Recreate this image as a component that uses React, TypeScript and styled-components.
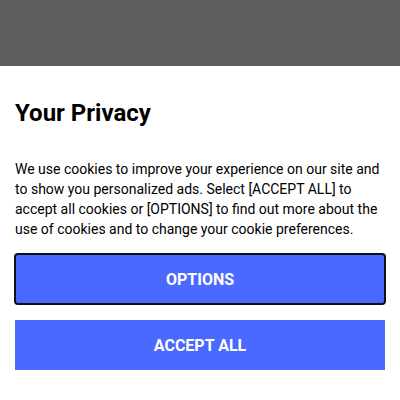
import React from "react";
import styled, { createGlobalStyle } from "styled-components";

const GlobalStyle = createGlobalStyle`
  *, *::before, *::after { box-sizing: border-box; }
  body {
    margin: 0;
    background: #5e5e5e;
    color: #000;
    font-family: Roboto, "Liberation Sans", sans-serif;
  }
`;

const Backdrop = styled.div`
  display: flex;
  flex-direction: column;
  justify-content: flex-end;
  min-height: 100vh;
  background: #5e5e5e;
`;

const Dialog = styled.section`
  display: flex;
  flex-direction: column;
  padding: 32px 15px 30px;
  background: #fff;
`;

const Title = styled.h1`
  margin: 0;
  font-size: 24px;
  line-height: 30px;
  font-weight: 700;
`;

const Message = styled.p`
  margin: 31px 0 15px;
  font-size: 14px;
  line-height: 20px;
`;

const Actions = styled.div`
  display: flex;
  flex-direction: column;
  gap: 16px;
`;

const ActionButton = styled.button`
  width: 100%;
  height: 50px;
  padding: 2px 16px 0;
  border: 0;
  background: #4a69ff;
  color: #fff;
  font-family: inherit;
  font-size: 16px;
  line-height: 20px;
  font-weight: 700;
  text-transform: uppercase;
  cursor: pointer;

  &:focus {
    outline: 2px solid #101010;
    outline-offset: -1px;
    border-radius: 3px;
  }
`;

export default function App() {
  return (
    <>
      <GlobalStyle />
      <Backdrop>
        <Dialog role="dialog" aria-modal="true" aria-labelledby="privacy-title">
          <Title id="privacy-title">Your Privacy</Title>
          <Message>
            We use cookies to improve your experience on our site and to show you
            personalized ads. Select [ACCEPT ALL] to accept all cookies or
            [OPTIONS] to find out more about the use of cookies and to change
            your cookie preferences.
          </Message>
          <Actions>
            <ActionButton type="button" autoFocus>Options</ActionButton>
            <ActionButton type="button">Accept all</ActionButton>
          </Actions>
        </Dialog>
      </Backdrop>
    </>
  );
}
